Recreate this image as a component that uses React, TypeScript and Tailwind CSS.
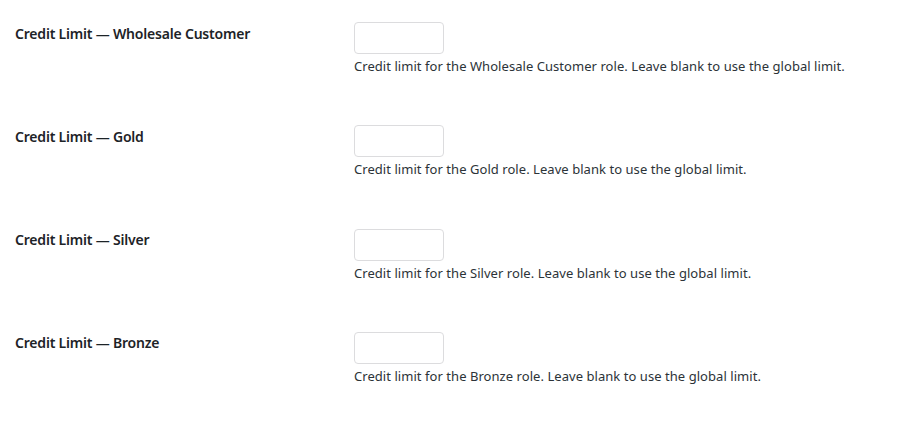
import React from "react";

const rows = [
  { label: "Wholesale Customer", desc: "Wholesale Customer" },
  { label: "Gold", desc: "Gold" },
  { label: "Silver", desc: "Silver" },
  { label: "Bronze", desc: "Bronze" },
];

export default function App() {
  return (
    <div
      className="w-[902px] h-[432px] bg-white pt-[7px] pl-[15px]"
      style={{ fontFamily: '"Noto Sans", "Open Sans", sans-serif' }}
    >
      {rows.map((r, i) => (
        <div key={i} className="grid grid-cols-[339px_1fr] h-[103.33px]">
          <div className="pt-[17.5px] text-[14px] leading-[18px] font-semibold text-[#1d2327] tracking-[-0.2px]">
            Credit Limit — {r.label}
          </div>
          <div className="pt-[15px]">
            <input
              type="text"
              className="block w-[90px] h-[32px] border border-[#dcdcde] rounded-[4px] bg-white outline-none"
            />
            <p className="mt-[3px] text-[13px] leading-[19.5px] text-[#2c3338] tracking-[0.05px]">
              Credit limit for the {r.desc} role. Leave blank to use the global limit.
            </p>
          </div>
        </div>
      ))}
    </div>
  );
}
